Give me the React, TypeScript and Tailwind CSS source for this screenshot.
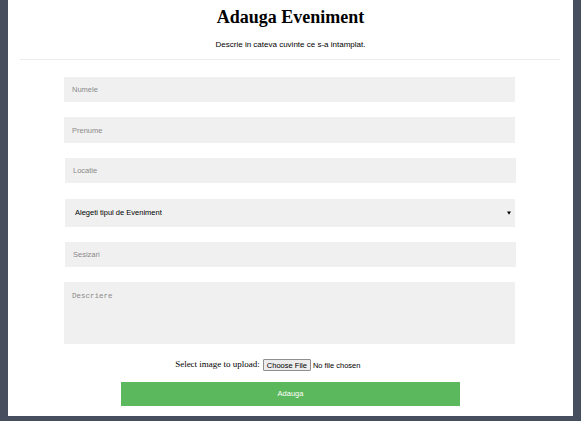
import React from 'react';

const sans = { fontFamily: '"Liberation Sans", Arial, sans-serif' };
const serif = { fontFamily: '"Liberation Serif", "Times New Roman", serif' };

const fieldCls =
  'block w-full bg-[#f0f0f0] px-2 text-[7.5px] text-black outline-none placeholder:text-[#8a8a8a]';

const App: React.FC = () => {
  return (
    <div className="min-h-[421px] bg-[#474e5d] px-2 pb-[5px]">
      <div className="h-[416px] bg-white flex flex-col">
        <h1 className="pt-[7px] text-center text-[18px] leading-[20px] font-bold text-black" style={serif}>
          Adauga Eveniment
        </h1>
        <p className="mt-[13px] text-center text-[8px] leading-[10px] text-black" style={sans}>
          Descrie in cateva cuvinte ce s-a intamplat.
        </p>
        <hr className="mt-[9px] ml-3 mr-[13px] border-0 border-t border-[#ececec]" />

        <form className="mt-[17px] w-[451px] ml-[56px] flex flex-col" style={sans} onSubmit={(e) => e.preventDefault()}>
          <input className={`${fieldCls} h-[25px]`} placeholder="Numele" />
          <input className={`${fieldCls} h-[26px] mt-[15px]`} placeholder="Prenume" />
          <input className={`${fieldCls} h-[25px] mt-[15px] ml-px`} placeholder="Locatie" />
          <div className="relative mt-[16px] ml-px h-[28px]">
            <select
              className="block w-full h-[28px] appearance-none bg-[#f0f0f0] pl-[10px] text-[7.5px] text-black outline-none"
              defaultValue=""
            >
              <option value="">Alegeti tipul de Eveniment</option>
              <option value="1">Accident</option>
              <option value="2">Incendiu</option>
            </select>
            <svg
              className="absolute right-[4px] top-[12px] pointer-events-none"
              width="4"
              height="4"
              viewBox="0 0 4 4"
            >
              <path d="M0 0.5h4L2 3.8z" fill="#000" />
            </svg>
          </div>
          <input className={`${fieldCls} h-[25px] mt-[15px] ml-px`} placeholder="Sesizari" />
          <textarea
            className={`${fieldCls} h-[62px] mt-[15px] pt-[9px] resize-none`}
            style={{ fontFamily: '"Liberation Mono", "Courier New", monospace' }}
            placeholder="Descriere"
          />

          <div className="mt-[15px] ml-[2px] h-[12px] flex items-center justify-center">
            <span className="text-[9px] text-black mr-[3px]" style={serif}>
              Select image to upload:
            </span>
            <input
              type="file"
              className="w-[143px] text-[7.5px] text-black file:h-[12px] file:px-[3px] file:mr-[2px] file:border file:border-[#8f8f8f] file:bg-[#ececec] file:rounded-[1px] file:text-black"
            />
          </div>

          <button
            type="submit"
            className="mt-[11px] ml-[57px] w-[339px] h-[24px] bg-[#5cb85c] text-white text-[7.5px]"
          >
            Adauga
          </button>
        </form>
      </div>
    </div>
  );
};

export default App;
